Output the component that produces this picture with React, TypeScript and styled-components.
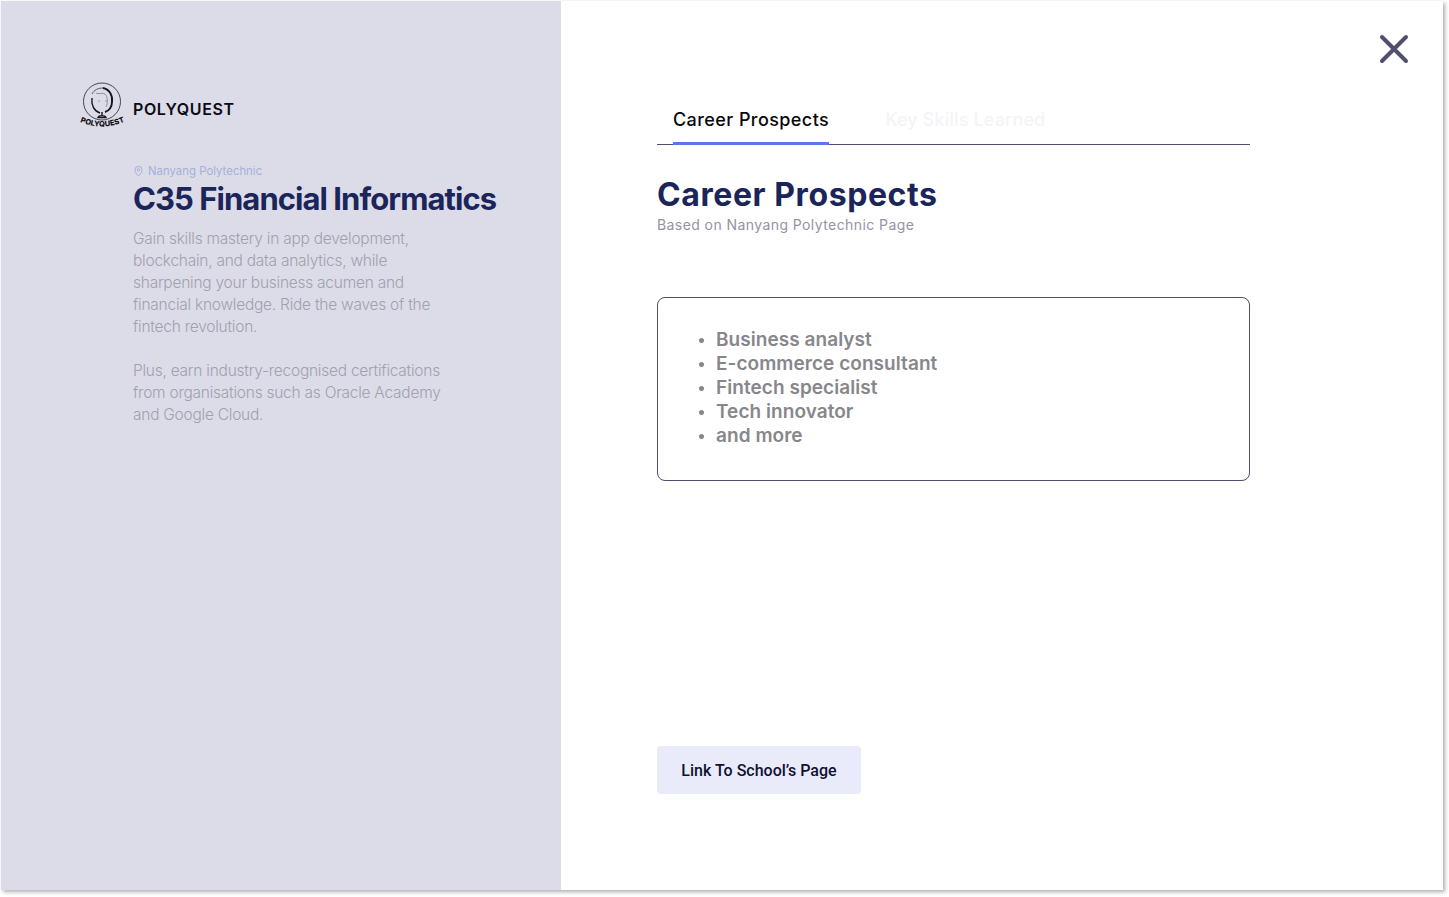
import React from "react";
import styled, { createGlobalStyle } from "styled-components";

const Global = createGlobalStyle`
  html, body { margin: 0; padding: 0; background: #fff; }
  body { font-family: "Inter", "Liberation Sans", sans-serif; overflow: hidden; }
  * { box-sizing: border-box; }
`;

const Page = styled.div`
  width: 1449px;
  height: 897px;
  padding: 1px 6px 7px 1px;
  background: #fff;
`;

const Modal = styled.div`
  position: relative;
  display: flex;
  height: 100%;
  background: #fff;
  box-shadow: 2px 2px 4px rgba(0, 0, 0, 0.32);
`;

const Side = styled.aside`
  flex: 0 0 560px;
  background: #dcdce9;
  padding: 81px 0 0 78px;
`;

const Brand = styled.div`
  display: flex;
  align-items: flex-start;
  gap: 9px;
`;

const BrandName = styled.div`
  margin-top: 17px;
  font-size: 16px;
  line-height: 20px;
  font-weight: 600;
  letter-spacing: 0.62px;
  color: #0b0b14;
`;

const SideBody = styled.div`
  margin: 34px 0 0 54px;
`;

const Location = styled.div`
  display: flex;
  align-items: center;
  gap: 4px;
  font-size: 11.3px;
  line-height: 14px;
  letter-spacing: 0.05px;
  color: #a5afd9;
`;

const CourseTitle = styled.h1`
  margin: 2px 0 0;
  font-size: 31px;
  line-height: 38px;
  font-weight: 700;
  letter-spacing: -0.95px;
  color: #1b2559;
  white-space: nowrap;
`;

const Blurb = styled.p`
  margin: 0 0 22px;
  width: 330px;
  font-size: 15.5px;
  line-height: 22px;
  font-weight: 300;
  letter-spacing: -0.25px;
  color: #a0a0ae;
  &:first-of-type { margin-top: 10px; }
`;

const Main = styled.main`
  flex: 1;
  display: flex;
  flex-direction: column;
  padding: 0 193px 96px 96px;
`;

const Close = styled.button`
  position: absolute;
  top: 30px;
  right: 31px;
  width: 36px;
  height: 36px;
  padding: 0;
  border: 0;
  background: none;
  display: flex;
  align-items: center;
  justify-content: center;
`;

const Tabs = styled.nav`
  display: flex;
  gap: 56px;
  margin-top: 104px;
  padding-left: 16px;
  border-bottom: 1px solid #4e4e6e;
`;

const Tab = styled.div<{ $active?: boolean }>`
  height: 40px;
  margin-bottom: -1px;
  padding-top: 3px;
  font-size: 18px;
  line-height: 24px;
  font-weight: 500;
  letter-spacing: ${(p) => (p.$active ? "0.42px" : "0.14px")};
  white-space: nowrap;
  color: ${(p) => (p.$active ? "#08080c" : "#f4f4f7")};
  border-bottom: 3px solid ${(p) => (p.$active ? "#5a78e6" : "transparent")};
`;

const Heading = styled.h2`
  margin: 30px 0 0;
  font-size: 32px;
  line-height: 40px;
  font-weight: 700;
  letter-spacing: 0.58px;
  color: #1b2559;
`;

const Sub = styled.div`
  font-size: 14px;
  line-height: 20px;
  letter-spacing: 0.42px;
  color: #9393a6;
`;

const Card = styled.section`
  margin-top: 62px;
  height: 184px;
  border: 1px solid #4e4e6e;
  border-radius: 8px;
  padding: 30px 0 0 58px;
`;

const Item = styled.li`
  font-size: 19px;
  line-height: 24px;
  font-weight: 600;
  letter-spacing: 0.05px;
  color: #87878b;
  &::before {
    content: "";
    display: inline-block;
    width: 5px;
    height: 5px;
    margin: 0 12px 0 -17px;
    border-radius: 50%;
    background: #87878b;
    vertical-align: 3px;
  }
`;

const List = styled.ul`
  margin: 0;
  padding: 0;
  list-style: none;
`;

const Action = styled.button`
  margin-top: auto;
  align-self: flex-start;
  width: 204px;
  height: 48px;
  border: 0;
  border-radius: 4px;
  background: #e9ebfb;
  font-family: "Roboto", "Inter", sans-serif;
  font-size: 16px;
  font-weight: 500;
  letter-spacing: 0;
  color: #101030;
`;

const Logo = () => (
  <svg width="45" height="48" viewBox="0 0 45 48" fill="none">
    <defs>
      <path id="logoArc" d="M1 40 Q23 49 45 40" />
    </defs>
    <circle cx="23" cy="19.5" r="18.5" stroke="#20202a" strokeWidth="0.8" />
    <path d="M13 12 C15 8 19 6 24 6" stroke="#55555f" strokeWidth="1" />
    <path d="M24 6 C30 7 34 13 33 20 C33 25 30 29 26 30" stroke="#15151c" strokeWidth="1.9" />
    <path d="M13 16 C12 23 15 29 21 31" stroke="#15151c" strokeWidth="1.4" />
    <path d="M17 11 C20 13 22 10 26 12 C29 15 29 21 27 25" stroke="#70707a" strokeWidth="0.7" />
    <circle cx="20" cy="19" r="0.6" fill="#50505a" />
    <circle cx="27" cy="19" r="0.6" fill="#50505a" />
    <path d="M23 30 V34 M19 35.5 C20 33 26 33 27 35.5 Z" stroke="#15151c" strokeWidth="1.4" />
    <text fontFamily="Inter, sans-serif" fontSize="7.6" fontWeight="800" fill="#111">
      <textPath href="#logoArc">POLYQUEST</textPath>
    </text>
  </svg>
);

const Pin = () => (
  <svg width="11" height="12" viewBox="0 0 11 12" fill="none" stroke="#a5afd9" strokeWidth="1">
    <path d="M5.5 11.2 C3.4 8.8 2 7 2 4.8 a3.5 3.5 0 0 1 7 0 C9 7 7.6 8.8 5.5 11.2 Z" />
    <circle cx="5.5" cy="4.8" r="1.2" />
  </svg>
);

const CloseIcon = () => (
  <svg width="30" height="30" viewBox="0 0 30 30" fill="none" stroke="#50506e" strokeWidth="4" strokeLinecap="round">
    <path d="M3 3 L27 27 M27 3 L3 27" />
  </svg>
);

export default function App() {
  return (
    <Page>
      <Global />
      <Modal>
        <Side>
          <Brand>
            <Logo />
            <BrandName>POLYQUEST</BrandName>
          </Brand>
          <SideBody>
            <Location>
              <Pin />
              Nanyang Polytechnic
            </Location>
            <CourseTitle>C35 Financial Informatics</CourseTitle>
            <Blurb>
              Gain skills mastery in app development, blockchain, and data analytics, while sharpening your business acumen and financial knowledge. Ride the waves of the fintech revolution.
            </Blurb>
            <Blurb>
              Plus, earn industry-recognised certifications from organisations such as Oracle Academy and Google Cloud.
            </Blurb>
          </SideBody>
        </Side>
        <Main>
          <Close aria-label="Close">
            <CloseIcon />
          </Close>
          <Tabs>
            <Tab $active>Career Prospects</Tab>
            <Tab>Key Skills Learned</Tab>
          </Tabs>
          <Heading>Career Prospects</Heading>
          <Sub>Based on Nanyang Polytechnic Page</Sub>
          <Card>
            <List>
              <Item>Business analyst</Item>
              <Item>E-commerce consultant</Item>
              <Item>Fintech specialist</Item>
              <Item>Tech innovator</Item>
              <Item>and more</Item>
            </List>
          </Card>
          <Action>Link To School’s Page</Action>
        </Main>
      </Modal>
    </Page>
  );
}
